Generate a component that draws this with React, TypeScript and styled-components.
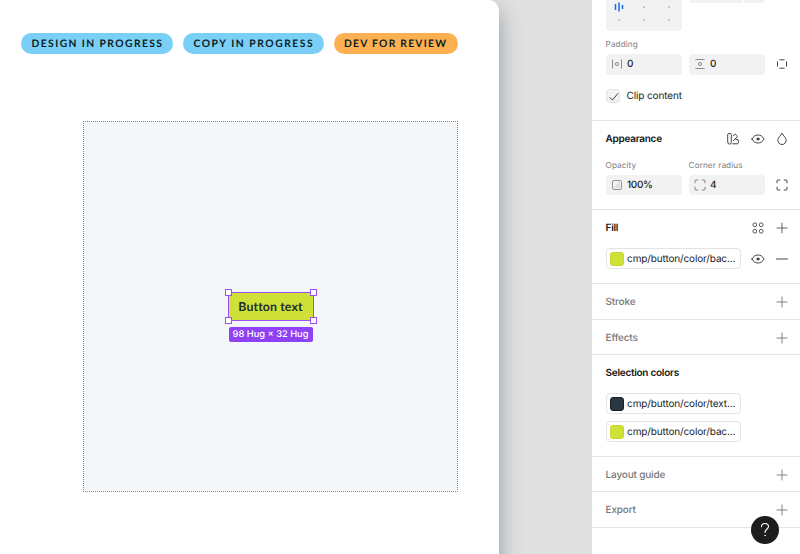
import React from "react";
import styled, { createGlobalStyle } from "styled-components";

const GlobalStyle = createGlobalStyle`
  * { box-sizing: border-box; }
  body {
    margin: 0;
    overflow: hidden;
    font-family: Inter, "Liberation Sans", sans-serif;
    text-rendering: geometricPrecision;
  }
`;

const Workspace = styled.div`
  display: flex;
  width: 800px;
  height: 554px;
  overflow: hidden;
  background: #e0e0e0;
`;

const Canvas = styled.main`
  flex: 1;
  min-width: 0;
  overflow: hidden;
`;

const Board = styled.section`
  display: flex;
  flex-direction: column;
  width: 499px;
  height: 620px;
  padding: 33px 0 0 21px;
  border-top-right-radius: 10px;
  background: #fff;
  box-shadow: 0 10px 22px rgba(50, 72, 84, 0.45);
`;

const Badges = styled.div`
  display: flex;
  gap: 10px;
`;

const Badge = styled.span<{ $color: string; $width: number; $spacing: number }>`
  display: flex;
  align-items: center;
  width: ${(p) => p.$width}px;
  height: 21px;
  padding: 1px 0 0 10.5px;
  border-radius: 11px;
  background: ${(p) => p.$color};
  color: #0c1b24;
  font: 700 10.3px/20px Lato, sans-serif;
  letter-spacing: ${(p) => p.$spacing}px;
  white-space: nowrap;
`;

const Frame = styled.div`
  width: 375px;
  height: 371px;
  margin: 67px 0 0 62px;
  border: 1px dotted #a35cf8;
`;

const Artboard = styled.div`
  display: flex;
  justify-content: center;
  height: 100%;
  padding-top: 170px;
  border-radius: 5px;
  background: #f3f7fa;
`;

const Selection = styled.div`
  position: relative;
  display: flex;
  flex-direction: column;
  align-items: center;
  gap: 6px;
  height: max-content;
`;

const SelectedButton = styled.div`
  position: relative;
  width: 86px;
  height: 29px;
  border: 1px solid #9b51ef;
  background: #cfe036;
  color: #1d2b33;
  font: 700 12.3px/28px Lato, sans-serif;
  letter-spacing: 0.12px;
  text-align: center;
`;

const Handle = styled.i<{ $x: "left" | "right"; $y: "top" | "bottom" }>`
  position: absolute;
  ${(p) => p.$x}: -4px;
  ${(p) => p.$y}: -4px;
  width: 7px;
  height: 7px;
  border: 1px solid #9b51ef;
  background: #fff;
`;

const SizeTag = styled.div`
  width: 84px;
  height: 15px;
  border-radius: 2px;
  background: #8f41f5;
  color: #fff;
  font-size: 9.3px;
  font-weight: 500;
  line-height: 15px;
  text-align: center;
  white-space: nowrap;
`;

const Panel = styled.aside`
  width: 209px;
  border-left: 1px solid #e2e2e2;
  background: #fff;
  color: #1c1c1c;
  font-size: 10px;
`;

const Section = styled.section<{ $height: number }>`
  height: ${(p) => p.$height}px;
  padding: 0 11px 0 13.6px;
  border-bottom: 1px solid #e4e4e4;
`;

const Heading = styled.header<{ $muted?: boolean }>`
  display: flex;
  align-items: center;
  justify-content: space-between;
  height: 35px;
  color: ${(p) => (p.$muted ? "#777" : "#151515")};
  font-weight: ${(p) => (p.$muted ? 500 : 600)};
  letter-spacing: ${(p) => (p.$muted ? -0.18 : -0.28)}px;
`;

const Actions = styled.div`
  display: flex;
  gap: 10.5px;
`;

const LayoutRow = styled.div`
  display: flex;
  gap: 7px;
  height: 31px;
`;

const AlignBox = styled.div`
  width: 76px;
  height: 31px;
  border-radius: 0 0 4px 4px;
  background: #f2f2f2;
`;

const GapBox = styled.div`
  width: 76px;
  height: 3px;
  border-radius: 0 0 4px 4px;
  background: linear-gradient(90deg, #f2f2f2 54px, #fff 54px, #fff 55px, #f2f2f2 55px);
`;

const Labels = styled.div<{ $top: number }>`
  display: grid;
  grid-template-columns: 76px 1fr;
  column-gap: 7px;
  margin-top: ${(p) => p.$top}px;
  height: 12px;
  color: #7c7c7c;
  font-size: 8.2px;
  line-height: 12px;
  letter-spacing: 0.08px;
`;

const Fields = styled.div<{ $top: number }>`
  display: grid;
  grid-template-columns: 76px 76px 14px;
  column-gap: 7px;
  align-items: center;
  margin-top: ${(p) => p.$top}px;

  & > svg { margin-left: 3.4px; }
`;

const Field = styled.div<{ $height: number }>`
  display: flex;
  align-items: center;
  gap: 3.5px;
  height: ${(p) => p.$height}px;
  padding-left: 4px;
  border-radius: 4px;
  background: #f2f2f2;
  font-weight: 500;
  letter-spacing: -0.4px;
`;

const CheckRow = styled.div`
  display: flex;
  align-items: center;
  gap: 7px;
  height: 14px;
  margin-top: 14px;
  letter-spacing: -0.14px;
`;

const CheckBox = styled.span`
  display: grid;
  place-items: center;
  width: 14px;
  height: 14px;
  border: 1px solid #e2e2e2;
  border-radius: 4px;
  background: #f3f3f3;
`;

const FillRow = styled.div`
  display: flex;
  align-items: center;
  justify-content: space-between;
  margin-top: 3px;
`;

const Chip = styled.div`
  display: flex;
  align-items: center;
  gap: 3.5px;
  width: 135px;
  height: 21px;
  padding-left: 3px;
  border: 1px solid #e3e3e3;
  border-radius: 4px;
  letter-spacing: -0.14px;
  white-space: nowrap;
`;

const Swatch = styled.i<{ $color: string; $edge: string }>`
  flex: none;
  width: 14px;
  height: 14px;
  border: 1px solid ${(p) => p.$edge};
  border-radius: 3px;
  background: ${(p) => p.$color};
`;

const Chips = styled.div`
  display: grid;
  gap: 7px;
  margin-top: 3px;
`;

const HelpButton = styled.button`
  position: fixed;
  right: 21px;
  bottom: 10px;
  display: grid;
  place-items: center;
  width: 28px;
  height: 28px;
  padding: 0;
  border: 0;
  border-radius: 50%;
  background: #1d1d1d;
`;

const paths = {
  plus: "M7 2v10M2 7h10",
  minus: "M1.5 7h11",
  eye: "M1 7C2.3 4.4 4.4 3 7 3s4.7 1.4 6 4c-1.3 2.6-3.4 4-6 4S2.300 9.600 1 7Z",
  drop: "M7 1.500C5.600 3.500 2.800 6 2.800 8.300A4.200 4.200 0 0 0 11.200 8.300C11.200 6 8.400 3.500 7 1.500Z",
  styles: "M1.700 2.500q0-1 1-1h1.600q1 0 1 1v7.800a1.800 1.800 0 0 1-3.600 0ZM7.200 3.800l1.700-1.400q.6-.5 1.100.1l1.100 1.300q.5.6-.1 1.200L7.300 8.700M10 7.400h1.300q1 0 1 1v2.400q0 1-1 1H6.600",
  corners: "M2 4.800V3q0-1 1-1h1.800M9.200 2H11q1 0 1 1v1.800M12 9.200V11q0 1-1 1H9.200M4.800 12H3q-1 0-1-1V9.200",
  sides: "M4.800 2.800h4.400M4.800 11.200h4.400M2.500 4.800v4.400M11.500 4.800v4.400",
  padX: "M2.500 2.800v8.400M11.500 2.800v8.400",
  padY: "M2.800 2.500h8.400M2.800 11.500h8.400",
  check: "M3 7.600l2.400 2.500L10.800 3.600",
};

type IconProps = { name: keyof typeof paths; color?: string; children?: React.ReactNode };

function Icon({ name, color = "#303030", children }: IconProps) {
  return (
    <svg width="14" height="14" viewBox="0 0 14 14" fill="none" stroke={color} strokeWidth="0.9" strokeLinecap="round" strokeLinejoin="round">
      <path d={paths[name]} />
      {children}
    </svg>
  );
}

const Eye = () => (
  <Icon name="eye"><circle cx="7" cy="7" r="1.100" fill="#555" /></Icon>
);

const VariableIcon = () => (
  <svg width="14" height="14" viewBox="0 0 14 14" fill="none" stroke="#444" strokeWidth="0.900">
    {[[3.8, 3.8], [10.200, 3.8], [3.8, 10.200], [10.200, 10.200]].map(([x, y]) => (
      <circle key={`${x}-${y}`} cx={x} cy={y} r="1.900" />
    ))}
  </svg>
);

const OpacityIcon = () => (
  <svg width="14" height="14" viewBox="0 0 14 14" fill="none" stroke="#888">
    <rect x="2.500" y="2.500" width="9" height="9" rx="1.500" strokeWidth="0.900" />
    <path d="M8.500 5h1M6.500 7h1M8.500 7h1M4.500 9h1M6.500 9h1M8.500 9h1" strokeWidth="0.700" />
  </svg>
);

const AlignmentDots = () => (
  <svg width="76" height="31" viewBox="0 0 76 31">
    <path d="M9.500 4v6M13 2.500v9M16.500 5v4" stroke="#1768e8" strokeWidth="1.500" />
    <g fill="#aaa">
      {[[38, 7], [63, 7], [13, 20], [38, 20], [63, 20]].map(([x, y]) => (
        <rect key={`${x}-${y}`} x={x - 0.7} y={y - 0.7} width="1.500" height="1.500" />
      ))}
    </g>
  </svg>
);

function EmptySection({ title, height }: { title: string; height: number }) {
  return (
    <Section $height={height}>
      <Heading $muted>
        {title}
        <Icon name="plus" color="#747474" />
      </Heading>
    </Section>
  );
}

export default function App() {
  return (
    <Workspace>
      <GlobalStyle />
      <Canvas>
        <Board>
          <Badges>
            <Badge $color="#79cff5" $width={152} $spacing={1.42}>DESIGN IN PROGRESS</Badge>
            <Badge $color="#79cff5" $width={140.5} $spacing={1.55}>COPY IN PROGRESS</Badge>
            <Badge $color="#fdb052" $width={124} $spacing={1.26}>DEV FOR REVIEW</Badge>
          </Badges>
          <Frame>
            <Artboard>
              <Selection>
                <SelectedButton>
                  Button text
                  <Handle $x="left" $y="top" />
                  <Handle $x="right" $y="top" />
                  <Handle $x="left" $y="bottom" />
                  <Handle $x="right" $y="bottom" />
                </SelectedButton>
                <SizeTag>98 Hug × 32 Hug</SizeTag>
              </Selection>
            </Artboard>
          </Frame>
        </Board>
      </Canvas>
      <Panel>
        <Section $height={121}>
          <LayoutRow>
            <AlignBox><AlignmentDots /></AlignBox>
            <GapBox />
          </LayoutRow>
          <Labels $top={7}><span>Padding</span></Labels>
          <Fields $top={3.5}>
            <Field $height={21}>
              <Icon name="padX" color="#808080"><circle cx="7" cy="7" r="1.600" /></Icon>0
            </Field>
            <Field $height={21}>
              <Icon name="padY" color="#808080"><circle cx="7" cy="7" r="1.600" /></Icon>0
            </Field>
            <Icon name="sides" />
          </Fields>
          <CheckRow>
            <CheckBox><Icon name="check" /></CheckBox>
            Clip content
          </CheckRow>
        </Section>
        <Section $height={89}>
          <Heading>
            Appearance
            <Actions><Icon name="styles" /><Eye /><Icon name="drop" /></Actions>
          </Heading>
          <Labels $top={3}><span>Opacity</span><span>Corner radius</span></Labels>
          <Fields $top={4}>
            <Field $height={20}><OpacityIcon />100%</Field>
            <Field $height={20}><Icon name="corners" color="#777" />4</Field>
            <Icon name="corners" />
          </Fields>
        </Section>
        <Section $height={74}>
          <Heading>
            Fill
            <Actions><VariableIcon /><Icon name="plus" color="#555" /></Actions>
          </Heading>
          <FillRow>
            <Chip><Swatch $color="#cfe036" $edge="#c6d630" />cmp/button/color/bac...</Chip>
            <Actions><Eye /><Icon name="minus" /></Actions>
          </FillRow>
        </Section>
        <EmptySection title="Stroke" height={36} />
        <EmptySection title="Effects" height={35} />
        <Section $height={102}>
          <Heading>Selection colors</Heading>
          <Chips>
            <Chip><Swatch $color="#293842" $edge="#15212a" />cmp/button/color/text...</Chip>
            <Chip><Swatch $color="#cfe036" $edge="#c6d630" />cmp/button/color/bac...</Chip>
          </Chips>
        </Section>
        <EmptySection title="Layout guide" height={35} />
        <EmptySection title="Export" height={36} />
      </Panel>
      <HelpButton aria-label="Help">
        <svg width="14" height="18" viewBox="0 0 14 18" fill="none" stroke="#fff" strokeWidth="1.100" strokeLinecap="round">
          <path d="M3.500 5.700C3.500 3.500 5 2.500 7 2.500s3.500 1.200 3.500 3.100C10.500 8.300 7 8.300 7 11.500" />
          <circle cx="7" cy="14.500" r="0.400" fill="#fff" strokeWidth="0.600" />
        </svg>
      </HelpButton>
    </Workspace>
  );
}
